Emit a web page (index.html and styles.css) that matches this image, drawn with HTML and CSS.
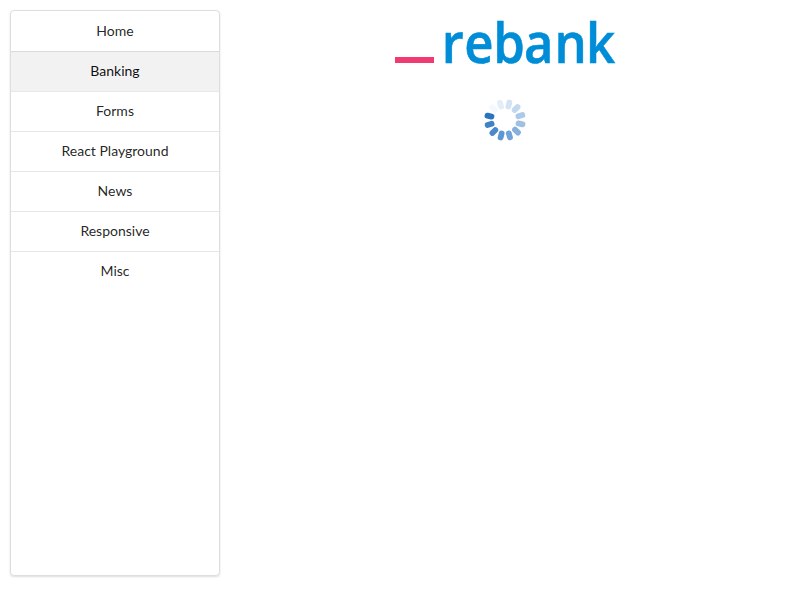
FILE: index.html
```html
<!DOCTYPE html>
<html lang="en">
<head>
<meta charset="utf-8">
<title>rebank</title>
<link rel="stylesheet" href="styles.css">
</head>
<body>
<div class="layout">
  <nav class="menu">
    <a class="item">Home</a>
    <a class="item active">Banking</a>
    <a class="item">Forms</a>
    <a class="item">React Playground</a>
    <a class="item">News</a>
    <a class="item">Responsive</a>
    <a class="item">Misc</a>
  </nav>
  <main class="content">
    <svg class="logo" width="220" height="60" viewBox="0 0 220 60">
      <rect class="bar" x="0" y="47" width="39" height="6"/>
      <text class="word" transform="scale(.9 1)" x="51.9 76.9 109.2 143.4 177.2 212.3" y="52.6">rebank</text>
    </svg>
    <svg class="spinner" width="44" height="44" viewBox="-22 -22 44 44">
      <defs><rect id="p" x="11.1" y="-2.9" width="9.8" height="5.8" rx="2.7"/></defs>
      <use href="#p" transform="rotate(194)" fill="#2874c1"/>
      <use href="#p" transform="rotate(164)" fill="#3e82c8"/>
      <use href="#p" transform="rotate(134)" fill="#4a8acc"/>
      <use href="#p" transform="rotate(104)" fill="#5c97d2"/>
      <use href="#p" transform="rotate(74)" fill="#70a3d7"/>
      <use href="#p" transform="rotate(44)" fill="#86b1de"/>
      <use href="#p" transform="rotate(14)" fill="#9dc1e5"/>
      <use href="#p" transform="rotate(-16)" fill="#acc9e8"/>
      <use href="#p" transform="rotate(-46)" fill="#c1d8ef"/>
      <use href="#p" transform="rotate(-76)" fill="#d3e3f4"/>
      <use href="#p" transform="rotate(-106)" fill="#e4eef8"/>
      <use href="#p" transform="rotate(-136)" fill="#f5f8fc"/>
    </svg>
  </main>
</div>
</body>
</html>
```
FILE: styles.css
```css
* { box-sizing: border-box; }
body {
  margin: 0;
  background: #fff;
  font-family: Lato, "Liberation Sans", sans-serif;
  font-size: 14px;
  color: rgba(0, 0, 0, .87);
}
.layout { display: flex; height: 600px; padding: 10px 0; }
.menu {
  width: 210px;
  height: 566px;
  margin-left: 10px;
  border: 1px solid rgba(34, 36, 38, .15);
  border-radius: 4px;
  box-shadow: 0 1px 2px 0 rgba(34, 36, 38, .15);
}
.item {
  display: block;
  height: 40px;
  line-height: 38px;
  text-align: center;
  border-bottom: 1px solid #e8e8e8;
}
.item:first-child { height: 41px; line-height: 40px; border-bottom-color: #dadada; }
.item:last-child { border-bottom: 0; }
.item.active { background: #f2f2f2; color: rgba(0, 0, 0, .95); }
.content {
  flex: 1;
  display: flex;
  flex-direction: column;
  align-items: center;
  padding-right: 10px;
}
.logo { display: block; overflow: visible; }
.bar { fill: #ef3b72; }
.word {
  font-family: "Open Sans", sans-serif;
  font-size: 56.5px;
  font-weight: 600;
  fill: #008dd8;
  stroke: #008dd8;
  stroke-width: .6;
}
.spinner { display: block; margin-top: 28px; }
```
